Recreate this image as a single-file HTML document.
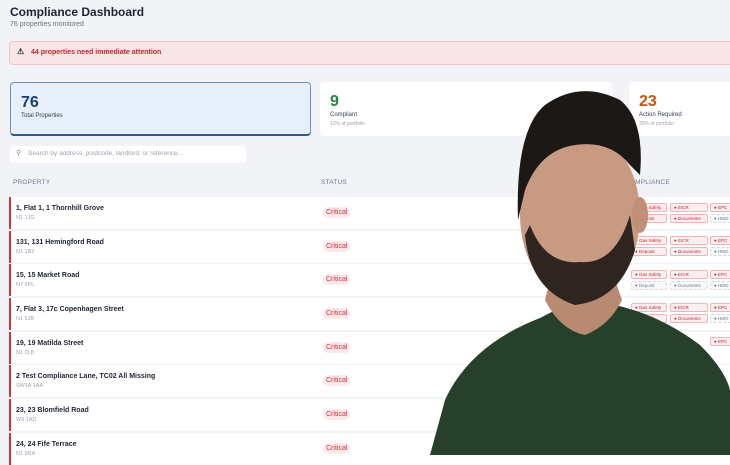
<!DOCTYPE html>
<html><head><meta charset="utf-8"><style>
*{margin:0;padding:0;box-sizing:border-box}
body{width:730px;height:455px;overflow:hidden;background:#f1f3f6;font-family:"Liberation Sans",sans-serif;position:relative}
.a{position:absolute}
h1{position:absolute;left:10px;top:5px;font-size:12px;font-weight:bold;color:#1e2433}
.sub{left:10px;top:21px;font-size:7px;color:#6b7280}
.alert{left:9px;top:41px;width:730px;height:24px;background:#f8e5e7;border:1px solid #f1c4c8;border-radius:4px;font-size:7px;color:#c0262d;font-weight:bold;padding:7px 0 0 21px}
.card{background:#fff;border-radius:4px;height:54px;top:82px}
.num{font-size:16px;font-weight:bold;position:absolute;left:10px;top:11px}
.lbl{font-size:6px;color:#374151;position:absolute;left:10px;top:30px}
.sm{font-size:5px;color:#9ca3af;position:absolute;left:10px;top:39px}
.search{left:10px;top:146px;width:236px;height:17px;background:#fff;border-radius:3px;font-size:6.5px;color:#9ca3af;padding:4px 0 0 18px}
.th{top:179px;font-size:6.5px;color:#6b7a8f;letter-spacing:.2px}
.row{left:9px;width:730px;height:32px;background:#fff;border-left:2px solid #d0323a}
.row b{position:absolute;left:5px;top:8px;font-size:7px;color:#1e2433}
.row i{position:absolute;left:5px;top:18px;font-size:5.5px;color:#9ca3af;font-style:normal}
.crit{position:absolute;left:312px;top:10px;font-size:7px;color:#d0323a;background:#fde8ea;border-radius:6px;padding:2px 3px}
.p{position:absolute;height:9px;font-size:4.5px;border:1px solid #f2b4b8;background:#fdeff0;color:#c0262d;border-radius:2px;padding:1px 0 0 3px}
.g{border:1px dashed #d4dae3;background:#f7f9fb;color:#6b7a8f}
</style></head><body>
<h1>Compliance Dashboard</h1>
<div class="a sub">76 properties monitored</div>
<div class="a alert"><span style="position:absolute;left:7px;top:5px;color:#333;font-size:8px">⚠</span>44 properties need immediate attention</div>
<div class="a card" style="left:10px;width:301px;background:#e7effb;border:1px solid #6b8fc2;border-bottom:2px solid #2f5a94"><div class="num" style="color:#1c3f73">76</div><div class="lbl">Total Properties</div></div>
<div class="a card" style="left:320px;width:292px"><div class="num" style="color:#1c8a3e">9</div><div class="lbl">Compliant</div><div class="sm">12% of portfolio</div></div>
<div class="a card" style="left:629px;width:110px"><div class="num" style="color:#c2560f">23</div><div class="lbl">Action Required</div><div class="sm">30% of portfolio</div></div>
<div class="a search"><span style="position:absolute;left:6px;top:3px;font-size:7px;color:#888">⚲</span>Search by address, postcode, landlord, or reference...</div>
<div class="a th" style="left:13px">PROPERTY</div>
<div class="a th" style="left:321px">STATUS</div>
<div class="a th" style="left:625px">COMPLIANCE</div>
<div class="a row" style="top:197px"><b>1, Flat 1, 1 Thornhill Grove</b><i>N1 1JG</i><span class="crit">Critical</span></div>
<div class="a row" style="top:231px"><b>131, 131 Hemingford Road</b><i>N1 1BZ</i><span class="crit">Critical</span></div>
<div class="a row" style="top:264px"><b>15, 15 Market Road</b><i>N7 9PL</i><span class="crit">Critical</span></div>
<div class="a row" style="top:298px"><b>7, Flat 3, 17c Copenhagen Street</b><i>N1 0JB</i><span class="crit">Critical</span></div>
<div class="a row" style="top:332px"><b>19, 19 Matilda Street</b><i>N1 0LB</i><span class="crit">Critical</span></div>
<div class="a row" style="top:365px"><b>2 Test Compliance Lane, TC02 All Missing</b><i>SW1A 1AA</i><span class="crit">Critical</span></div>
<div class="a row" style="top:399px"><b>23, 23 Blomfield Road</b><i>W9 1AD</i><span class="crit">Critical</span></div>
<div class="a row" style="top:433px"><b>24, 24 Fife Terrace</b><i>N1 9RA</i><span class="crit">Critical</span></div>
<div class="a" style="left:0;top:0">
<div class="p" style="left:631px;top:203px;width:36px">● Gas Safety</div><div class="p" style="left:670px;top:203px;width:38px">● EICR</div><div class="p" style="left:710px;top:203px;width:30px">● EPC</div>
<div class="p" style="left:631px;top:214px;width:36px">● Deposit</div><div class="p" style="left:670px;top:214px;width:38px">● Documents</div><div class="p g" style="left:710px;top:214px;width:30px">● HMO</div>
<div class="p" style="left:631px;top:236px;width:36px">● Gas Safety</div><div class="p" style="left:670px;top:236px;width:38px">● EICR</div><div class="p" style="left:710px;top:236px;width:30px">● EPC</div>
<div class="p" style="left:631px;top:247px;width:36px">● Deposit</div><div class="p" style="left:670px;top:247px;width:38px">● Documents</div><div class="p g" style="left:710px;top:247px;width:30px">● HMO</div>
<div class="p" style="left:631px;top:270px;width:36px">● Gas Safety</div><div class="p" style="left:670px;top:270px;width:38px">● EICR</div><div class="p" style="left:710px;top:270px;width:30px">● EPC</div>
<div class="p g" style="left:631px;top:281px;width:36px">● Deposit</div><div class="p g" style="left:670px;top:281px;width:38px">● Documents</div><div class="p g" style="left:710px;top:281px;width:30px">● HMO</div>
<div class="p" style="left:631px;top:303px;width:36px">● Gas Safety</div><div class="p" style="left:670px;top:303px;width:38px">● EICR</div><div class="p" style="left:710px;top:303px;width:30px">● EPC</div>
<div class="p" style="left:631px;top:314px;width:36px">● Deposit</div><div class="p" style="left:670px;top:314px;width:38px">● Documents</div><div class="p g" style="left:710px;top:314px;width:30px">● HMO</div>
<div class="p" style="left:710px;top:337px;width:30px">● EPC</div>
</div>
<svg class="a" style="left:0;top:0" width="730" height="455" viewBox="0 0 730 455">
<path d="M430 455 L445 400 Q470 345 540 318 L575 300 L615 305 Q660 315 700 345 Q725 370 730 390 L730 455 Z" fill="#27402c"/>
<path d="M545 300 Q560 330 585 335 Q610 325 622 300 L615 280 L550 280 Z" fill="#b98a72"/>
<ellipse cx="580" cy="215" rx="60" ry="85" fill="#c99a82"/>
<path d="M518 220 Q515 130 545 105 Q580 80 620 100 Q645 120 640 175 L630 165 Q610 140 575 145 Q540 150 525 190 Z" fill="#1c1816"/>
<path d="M525 235 Q530 290 575 305 Q620 300 635 250 L630 215 Q615 265 580 262 Q545 265 530 225 Z" fill="#2e2520"/>
<ellipse cx="640" cy="215" rx="8" ry="18" fill="#c08f77"/>
</svg>
</body></html>
